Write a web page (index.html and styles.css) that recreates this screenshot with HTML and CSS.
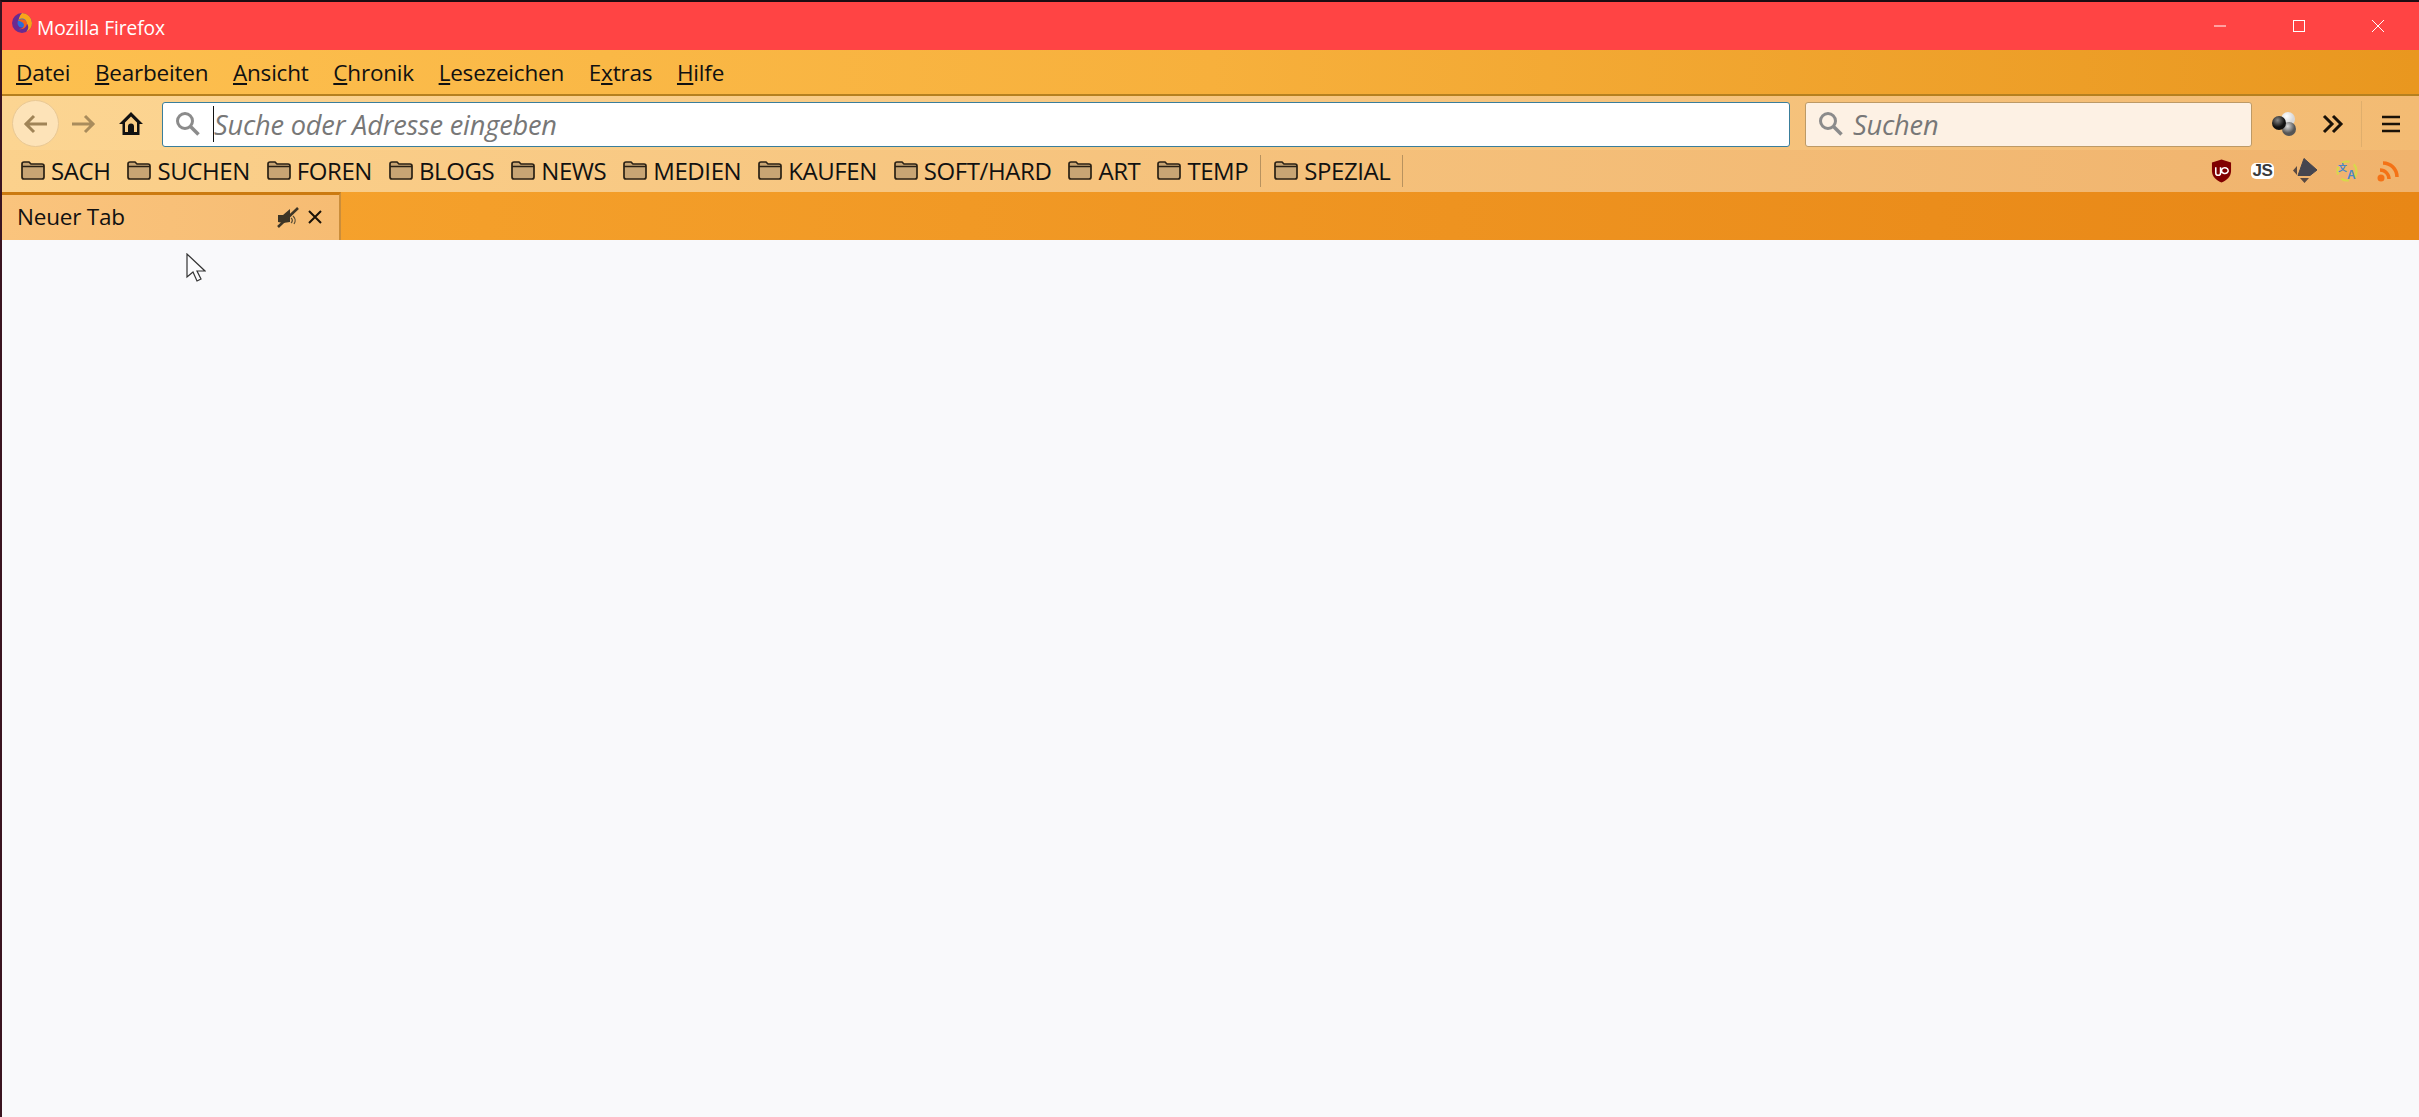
FILE: index.html
```html
<!DOCTYPE html>
<html lang="de">
<head>
<meta charset="utf-8">
<title>Mozilla Firefox</title>
<link rel="stylesheet" href="styles.css">
</head>
<body>
<div class="window">
  <header class="titlebar">
    <svg class="fx" viewBox="0 0 20 20" width="20" height="20"><circle cx="10" cy="10" r="10" fill="#6a2a90"/><path d="M10 0a10 10 0 0 1 10 10 10 10 0 0 1-6 9c3-3 3-7 0-9-1-1-3-1-4 0l-4-1c1-3 1-6 4-9z" fill="#f9a51a"/><circle cx="10" cy="10" r="4.5" fill="#2a6cd8"/><path d="M6 8c3-3 8-2 9 2 0 4-4 7-8 6 3 0 5-2 5-4s-3-4-6-4z" fill="#f2601c"/></svg>
    <span class="title">Mozilla Firefox</span>
    <div class="caption">
      <svg viewBox="0 0 14 14" width="14" height="14"><path d="M1 7h12" stroke="#fff" fill="none"/></svg>
      <svg viewBox="0 0 12 12" width="12" height="12"><rect x=".5" y=".5" width="11" height="11" stroke="#fff" fill="none"/></svg>
      <svg viewBox="0 0 14 14" width="14" height="14"><path d="M1 1l12 12M13 1L1 13" stroke="#fff" fill="none"/></svg>
    </div>
  </header>
  <nav class="menubar">
    <span><u>D</u>atei</span><span><u>B</u>earbeiten</span><span><u>A</u>nsicht</span><span><u>C</u>hronik</span><span><u>L</u>esezeichen</span><span>E<u>x</u>tras</span><span><u>H</u>ilfe</span>
  </nav>
  <div class="navbar">
    <div class="backbtn"><svg viewBox="0 0 26 20" width="26" height="20"><path d="M2 10h22M11 2l-8 8 8 8" stroke="#a08457" stroke-width="3" fill="none"/></svg></div>
    <svg class="fwd" viewBox="0 0 26 20" width="26" height="20"><path d="M2 10h22M15 2l8 8-8 8" stroke="#a98c5c" stroke-width="3" fill="none"/></svg>
    <svg class="home" viewBox="0 0 26 26" width="26" height="26"><path d="M13 1L1 13h3.500v11h17V13H25z" fill="#111"/><path d="M13 5.500l-6 6V21h3v-5.500a3 3 0 0 1 6 0V21h3v-9.500z" fill="#f9cd85"/><rect x="11.500" y="17" width="3" height="5" fill="#111"/></svg>
    <div class="urlbar">
      <svg class="glass" viewBox="0 0 26 26" width="26" height="26"><circle cx="10" cy="10" r="7.500" stroke="#8b8b8b" stroke-width="3" fill="none"/><path d="M15.500 15.500l8 8" stroke="#8b8b8b" stroke-width="3.500" fill="none"/></svg>
      <span class="caret"></span>
      <span class="ph">Suche oder Adresse eingeben</span>
    </div>
    <div class="searchbar">
      <svg class="glass" viewBox="0 0 26 26" width="26" height="26"><circle cx="10" cy="10" r="7.500" stroke="#8b8b8b" stroke-width="3" fill="none"/><path d="M15.500 15.500l8 8" stroke="#8b8b8b" stroke-width="3.500" fill="none"/></svg>
      <span class="ph">Suchen</span>
    </div>
    <svg class="balls" viewBox="0 0 24 24" width="24" height="24"><defs><radialGradient id="w" cx=".4" cy=".3"><stop offset="0" stop-color="#fff"/><stop offset="1" stop-color="#d8d8d8"/></radialGradient><radialGradient id="g" cx=".4" cy=".3"><stop offset="0" stop-color="#ddd"/><stop offset="1" stop-color="#555"/></radialGradient><radialGradient id="k" cx=".4" cy=".3"><stop offset="0" stop-color="#888"/><stop offset="1" stop-color="#111"/></radialGradient></defs><circle cx="16" cy="7" r="7" fill="url(#w)"/><circle cx="17" cy="17" r="7" fill="url(#g)"/><circle cx="7" cy="11" r="7" fill="url(#k)"/></svg>
    <svg class="chev" viewBox="0 0 22 20" width="22" height="20"><path d="M2 2l8 8-8 8M11 2l8 8-8 8" stroke="#1a1208" stroke-width="3" fill="none"/></svg>
    <span class="navsep"></span>
    <svg class="burger" viewBox="0 0 18 18" width="18" height="18"><path d="M0 2h18M0 9h18M0 16h18" stroke="#1a1208" stroke-width="2.600"/></svg>
  </div>
  <div class="bookmarks">
    <span class="bm"><svg class="folder"><use href="#folder"/></svg>SACH</span>
    <span class="bm"><svg class="folder"><use href="#folder"/></svg>SUCHEN</span>
    <span class="bm"><svg class="folder"><use href="#folder"/></svg>FOREN</span>
    <span class="bm"><svg class="folder"><use href="#folder"/></svg>BLOGS</span>
    <span class="bm"><svg class="folder"><use href="#folder"/></svg>NEWS</span>
    <span class="bm"><svg class="folder"><use href="#folder"/></svg>MEDIEN</span>
    <span class="bm"><svg class="folder"><use href="#folder"/></svg>KAUFEN</span>
    <span class="bm"><svg class="folder"><use href="#folder"/></svg>SOFT/HARD</span>
    <span class="bm"><svg class="folder"><use href="#folder"/></svg>ART</span>
    <span class="bm"><svg class="folder"><use href="#folder"/></svg>TEMP</span>
    <span class="bmsep"></span>
    <span class="bm"><svg class="folder"><use href="#folder"/></svg>SPEZIAL</span>
    <span class="bmsep"></span>
    <div class="ext">
      <svg viewBox="0 0 22 24" width="21" height="24"><path d="M11 0l10 3v9c0 6-5 10-10 12C6 22 1 18 1 12V3z" fill="#800000"/><path d="M5 8v6a2.500 2.500 0 0 0 5 0V8M11 11.500a3.500 3 0 1 1 6 2.200 3.500 3 0 0 1-6-2.200z" stroke="#fff" stroke-width="1.600" fill="none"/></svg>
      <span class="js">JS</span>
      <svg viewBox="0 0 24 26" width="24" height="26"><path d="M11 .5L24 12l-7 5.500H5z" fill="#45454f" stroke="#45454f" stroke-linejoin="round"/><path d="M4 8v9l-4-4.500zM7 20h9l-4.500 5z" fill="#5a4a42"/></svg>
      <svg viewBox="0 0 22 22" width="22" height="22"><circle cx="11" cy="11" r="9.500" stroke="#d8d84a" stroke-width="2.200" stroke-dasharray="8 5" fill="none"/><text x="2" y="11" class="tr1">文</text><text x="11" y="19" class="tr2">A</text></svg>
      <svg viewBox="0 0 22 22" width="22" height="22"><circle cx="4" cy="18" r="3.500" fill="#f47216"/><path d="M3 10a9 9 0 0 1 9 9M6 3a14 14 0 0 1 14 14" stroke="#f47216" stroke-width="3.500" fill="none"/></svg>
    </div>
  </div>
  <div class="tabs">
    <div class="tab">
      <span class="tabtitle">Neuer Tab</span>
      <svg class="mute" viewBox="0 0 22 22" width="22" height="22"><path d="M1 9h5l7-6v13l-7 1-5-1z" fill="#3d3526"/><path d="M14 12a3 3 0 0 1 0 5M16 10a6 6 0 0 1 1 8" stroke="#5a4e36" fill="none" stroke-width="1.300"/><path d="M1 21L21 2" stroke="#3d3526" stroke-width="2.500"/></svg>
      <svg class="close" viewBox="0 0 14 14" width="14" height="14"><path d="M1 1l12 12M13 1L1 13" stroke="#1a1208" stroke-width="2"/></svg>
    </div>
  </div>
  <main class="content"></main>
  <svg class="pointer" viewBox="0 0 20 30" width="20" height="30"><path d="M1 1v23l6-5 4 9 4-2-4-8h8z" fill="#fbfbfd" stroke="#333" stroke-width="1.200"/></svg>
</div>
<svg class="defs" width="0" height="0"><symbol id="folder" viewBox="0 0 24 20"><path d="M1 4a2 2 0 0 1 2-2h5l2 2h11a2 2 0 0 1 2 2v11a2 2 0 0 1-2 2H3a2 2 0 0 1-2-2z" fill="#c8a574" stroke="#2a2115" stroke-width="1.700"/><path d="M1 6.500h22" stroke="#2a2115" stroke-width="1.500"/></symbol></svg>
</body>
</html>
```

FILE: styles.css
```css
* { box-sizing: border-box; }
html, body { margin: 0; height: 100%; overflow: hidden; }
body { font-family: "Open Sans", "Noto Sans", sans-serif; color: #111; background: #f9f9fb; }
.window { position: relative; height: 1117px; display: flex; flex-direction: column; border-top: 2px solid #1b0c12; border-left: 2px solid #3a1420; }
.titlebar { height: 48px; flex: none; background: #ff4444; display: flex; align-items: center; padding-left: 10px; color: #fff; }
.fx { flex: none; margin-top: -6px; }
.title { font-size: 19.200px; margin-left: 5px; letter-spacing: -.1px; padding-top: 2px; }
.caption { margin-left: auto; display: flex; align-items: center; gap: 66px; padding-right: 34px; }
.menubar { height: 46px; flex: none; display: flex; align-items: center; gap: 24.700px; padding-left: 14px; font-size: 22.500px; letter-spacing: -.2px; background: linear-gradient(90deg, #fdc050, #f7b03c 50%, #e9971f); border-bottom: 2px solid #b5801f; }
.navbar { height: 54px; flex: none; display: flex; align-items: center; background: linear-gradient(90deg, #fcd592, #f3bb73); padding: 2px 0 0 10px; }
.backbtn { width: 47px; height: 47px; flex: none; border-radius: 50%; background: #fde3b8; border: 1px solid #e9c894; display: flex; align-items: center; justify-content: center; margin-top: -1px; }
.fwd { flex: none; margin-left: 11px; }
.home { flex: none; margin-left: 22px; }
.urlbar { width: 1628px; height: 45px; flex: none; margin-left: 18px; background: #fff; border: 1px solid #3a7e9b; border-radius: 3px; display: flex; align-items: center; padding-left: 12px; }
.glass { flex: none; }
.caret { width: 1px; height: 36px; background: #111; margin-left: 12px; }
.ph { font-style: italic; font-size: 27.200px; color: #777; letter-spacing: -.2px; }
.searchbar { width: 447px; height: 45px; flex: none; margin-left: 15px; background: #fdf1e4; border: 1px solid #bd9a66; border-radius: 3px; display: flex; align-items: center; padding-left: 12px; gap: 9px; }
.balls { flex: none; margin-left: 20px; }
.chev { flex: none; margin-left: 26px; }
.navsep { width: 1px; height: 46px; background: #dfae6c; margin-left: 17px; }
.burger { flex: none; margin-left: 20px; }
.bookmarks { height: 42px; flex: none; display: flex; align-items: center; padding: 0 0 2px 19px; font-size: 24px; letter-spacing: -.42px; background: linear-gradient(90deg, #fbd18c, #f0b36d); }
.bm { display: flex; align-items: center; gap: 6px; margin-right: 17px; }
.folder { width: 24px; height: 20px; flex: none; }
.bmsep { width: 1px; height: 32px; background: #b8925e; margin: 2px 13px 0 -5px; }
.ext { margin-left: auto; display: flex; align-items: center; gap: 19px; padding: 2px 20px 0 0; }
.js { font: 700 17px/16px "Liberation Sans", sans-serif; letter-spacing: -.5px; color: #3a3a3a; background: #fff; border-radius: 5px; width: 23px; text-align: center; }
.tr1 { font: 700 9px "Noto Sans CJK SC", sans-serif; fill: #4a86c8; }
.tr2 { font: 700 12px "Liberation Sans", sans-serif; fill: #4a86c8; }
.tabs { height: 48px; flex: none; background: linear-gradient(90deg, #f7a52f, #e88716); }
.tab { width: 339px; height: 48px; display: flex; align-items: center; padding: 0 0 2px 15px; background: linear-gradient(90deg, #fac47d, #f6bc73); border-top: 3px solid #cb7a10; border-right: 2px solid #cb8d3a; }
.tabtitle { font-size: 22.500px; letter-spacing: -.2px; }
.mute { flex: none; margin-left: auto; }
.close { flex: none; margin-left: 9px; margin-right: 17px; }
.content { flex: 1; background: #f9f9fb; }
.pointer { position: absolute; left: 184px; top: 251px; }
.defs { position: absolute; }
```
